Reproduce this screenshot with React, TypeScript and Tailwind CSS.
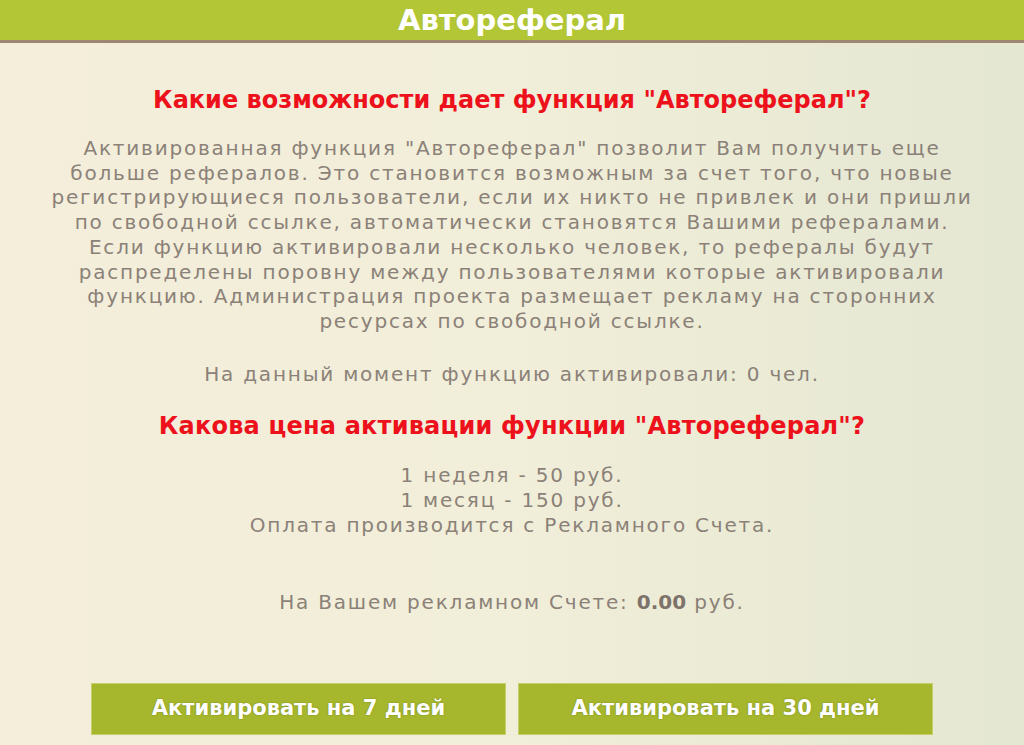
export default function App() {
  return (
    <div
      className="min-h-screen w-full bg-gradient-to-r from-[#f4eedb] via-[#f1eed9] to-[#e4e7d2] text-[#8b8178]"
      style={{ fontFamily: '"DejaVu Sans", sans-serif' }}
    >
      <header className="h-[43px] bg-[#b2c636] border-b-[3px] border-[#9d8772] flex items-center justify-center">
        <h1 className="text-[29px] font-bold text-white leading-none">Автореферал</h1>
      </header>

      <main className="flex flex-col items-center text-center">
        <h2 className="mt-[42px] text-[24px] leading-[30px] font-bold text-[#ec111b]">
          Какие возможности дает функция "Автореферал"?
        </h2>

        <p className="mt-[21px] text-[20px] leading-[24.7px] tracking-[1.8px] whitespace-nowrap">
          Активированная функция "Автореферал" позволит Вам получить еще
          <br />
          больше рефералов. Это становится возможным за счет того, что новые
          <br />
          регистрирующиеся пользователи, если их никто не привлек и они пришли
          <br />
          по свободной ссылке, автоматически становятся Вашими рефералами.
          <br />
          Если функцию активировали несколько человек, то рефералы будут
          <br />
          распределены поровну между пользователями которые активировали
          <br />
          функцию. Администрация проекта размещает рекламу на сторонних
          <br />
          ресурсах по свободной ссылке.
        </p>

        <p className="mt-[28px] text-[20px] leading-[25px] tracking-[1.8px]">
          На данный момент функцию активировали: 0 чел.
        </p>

        <h2 className="mt-[24px] text-[24px] leading-[30px] font-bold tracking-[0.2px] text-[#ec111b]">
          Какова цена активации функции "Автореферал"?
        </h2>

        <p className="mt-[22px] text-[20px] leading-[25px] tracking-[1.8px]">
          1 неделя - 50 руб.
          <br />
          1 месяц - 150 руб.
          <br />
          Оплата производится с Рекламного Счета.
        </p>

        <p className="mt-[52px] text-[20px] leading-[25px] tracking-[1.8px]">
          На Вашем рекламном Счете: <b className="text-[#7d736a] tracking-normal">0.00</b> руб.
        </p>

        <div className="mt-[68px] flex gap-3">
          <button className="w-[415px] h-[52px] bg-[#a6b72d] border border-[#c3cf6a] text-white text-[21px] font-bold [text-shadow:0_0_2px_rgba(0,0,0,0.25)]">
            Активировать на 7 дней
          </button>
          <button className="w-[415px] h-[52px] bg-[#a6b72d] border border-[#c3cf6a] text-white text-[21px] font-bold [text-shadow:0_0_2px_rgba(0,0,0,0.25)]">
            Активировать на 30 дней
          </button>
        </div>
      </main>
    </div>
  );
}
